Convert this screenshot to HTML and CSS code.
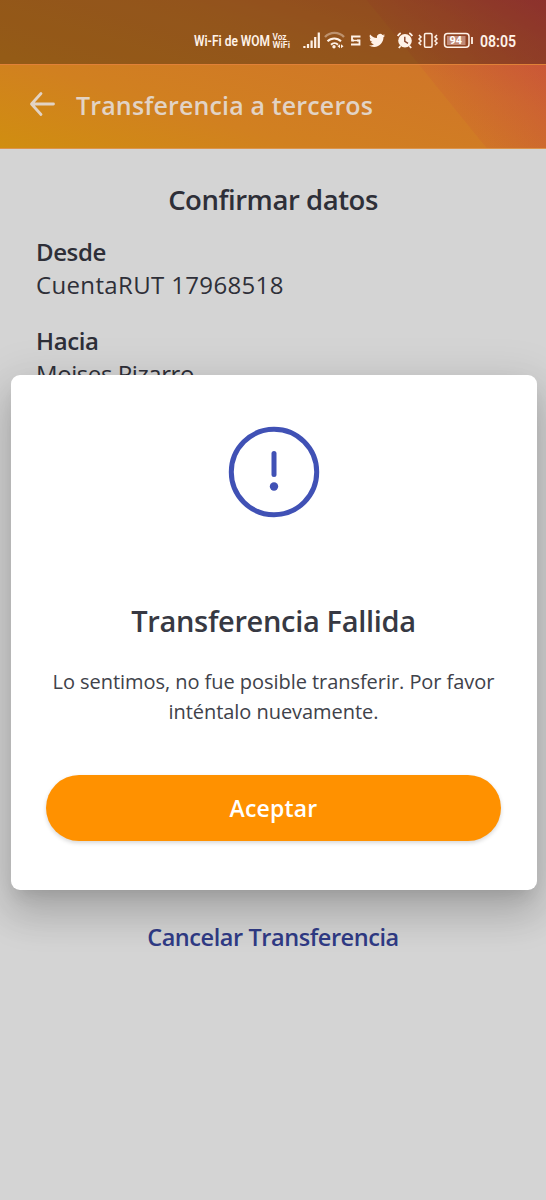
FILE: index.html
```html
<!DOCTYPE html>
<html lang="es">
<head>
<meta charset="utf-8">
<title>Transferencia a terceros</title>
<link rel="stylesheet" href="styles.css">
</head>
<body>
<div class="screen">
  <header class="header">
    <div class="statusbar">
      <svg class="status-icons" viewBox="190 26 350 30" width="350" height="30">
        <g class="status-text">
          <text x="194" y="46" font-size="14" textLength="76" lengthAdjust="spacingAndGlyphs">Wi-Fi de WOM</text>
          <text x="272.500" y="39.500" font-size="8.500" textLength="14" lengthAdjust="spacingAndGlyphs">Voz</text>
          <text x="272.500" y="48" font-size="8.500" textLength="17.500" lengthAdjust="spacingAndGlyphs">WiFi</text>
          <text x="480" y="46.500" font-size="17" textLength="36" lengthAdjust="spacingAndGlyphs">08:05</text>
        </g>
        <g fill="none" stroke="#fff2e8" stroke-width="2.200">
          <path d="M304.400 48v-2M308 48v-4M311.600 48v-7.500M315.200 48v-11M318.800 48V32.500"/>
          <path d="M325 38.500a13 13 0 0 1 19 0" opacity=".4" stroke-width="2.400" transform="translate(0 -1.500)"/>
          <path d="M327.500 41.300a9.500 9.500 0 0 1 13.500 0M331 44.700a5 5 0 0 1 7 0" stroke-width="2"/>
          <path d="M360.500 36.500H352v4h2M357 40.500h2.500v4H351" stroke-width="1.800"/>
          <path d="M352 40.500h8" stroke-width="1.400"/>
        </g>
        <circle cx="334" cy="46.700" r="1.700" fill="#fff2e8"/>
        <path d="M337.500 46.300l2.500-2v4zM343.500 46.300l-2.500-2v4z" fill="#fff2e8"/>
        <path transform="translate(369 32.400) scale(.67)" fill="#fff2e8" d="M23.950 4.570a10 10 0 0 1-2.820.78 4.960 4.960 0 0 0 2.160-2.730c-.95.560-2 .96-3.130 1.190a4.920 4.920 0 0 0-8.380 4.480C7.690 8.100 4.070 6.130 1.640 3.160a4.820 4.820 0 0 0-.67 2.480c0 1.710.87 3.210 2.190 4.100a4.900 4.900 0 0 1-2.230-.62v.06a4.920 4.920 0 0 0 3.950 4.830 5 5 0 0 1-2.210.08 4.940 4.940 0 0 0 4.600 3.420A9.870 9.870 0 0 1 0 19.540a13.990 13.990 0 0 0 7.560 2.210c9.050 0 14-7.500 14-13.980l-.02-.64a9.940 9.940 0 0 0 2.410-2.560z"/>
        <circle cx="405" cy="40.700" r="6.800" fill="#fff2e8"/>
        <path d="M397.700 36a8 8 0 0 1 3-3M409.300 33a8 8 0 0 1 3 3M400.500 46l-1.700 2M409.500 46l1.700 2" stroke="#fff2e8" stroke-width="1.800" fill="none"/>
        <path d="M404.800 36.800v4.500l3.200 2" stroke="#87432b" stroke-width="1.400" fill="none"/>
        <g fill="none" stroke="#fff2e8" stroke-width="1.500">
          <rect x="424.500" y="33.500" width="7.500" height="13.800" rx="1.200"/>
          <path d="M419 35l2 2-2 2 2 2-2 2 2 2M437 35l-2 2 2 2-2 2 2 2-2 2"/>
          <rect x="444.500" y="33.500" width="24.500" height="13.800" rx="3"/>
          <path d="M472 37v7" stroke-width="1.800"/>
        </g>
        <rect x="447" y="36" width="18.500" height="9" fill="#c08a77"/>
        <text class="battery-text" x="449.500" y="44.300" font-size="11" textLength="12.500" lengthAdjust="spacingAndGlyphs">94</text>
      </svg>
    </div>
    <div class="appbar">
      <svg class="back" viewBox="0 0 26 26" width="26" height="26"><path d="M12 2.500L2.500 13l9.500 10.500M3 13H24.500"/></svg>
      <h1 class="title">Transferencia a terceros</h1>
    </div>
  </header>
  <main class="content">
    <h2 class="heading">Confirmar datos</h2>
    <section class="account">
      <h3 class="label">Desde</h3>
      <p class="value number">CuentaRUT 17968518</p>
    </section>
    <section class="account">
      <h3 class="label">Hacia</h3>
      <p class="value name">Moises Pizarro</p>
    </section>
    <a class="cancel">Cancelar Transferencia</a>
  </main>
  <div class="dialog" role="alertdialog">
    <svg class="alert" viewBox="0 0 92 92" width="92" height="92">
      <circle cx="46" cy="46" r="42.700"/>
      <path d="M46 27.500v21"/>
      <circle class="dot" cx="46" cy="60.500" r="4.200"/>
    </svg>
    <h2 class="dialog-title">Transferencia Fallida</h2>
    <p class="message">Lo sentimos, no fue posible transferir. Por favor<br>inténtalo nuevamente.</p>
    <button class="accept">Aceptar</button>
  </div>
</div>
</body>
</html>
```
FILE: styles.css
```css
* { box-sizing: border-box; }
body, h1, h2, h3, p { margin: 0; }
body { font-family: "Open Sans", "Noto Sans", sans-serif; color: #2e2f38; }
.screen { position: relative; height: 1200px; overflow: hidden; background: #d4d4d4; }
.header { height: 149px; background: linear-gradient(51deg, transparent 73%, rgba(200, 65, 60, .12) 73.2%, rgba(196, 50, 75, .5)), linear-gradient(17deg, #d08e10 0%, #d18020 30%, #d07728 65%, #cd6a2d 86%, #c95a35 100%); }
.statusbar { height: 65px; padding: 26px 0 0 190px; background: rgba(0, 0, 0, .29); border-bottom: 1px solid #e18138; }
.status-icons { display: block; }
.status-text { font-family: Roboto, sans-serif; font-weight: 600; fill: #fff2e8; }
.battery-text { font-family: Roboto, sans-serif; font-weight: 700; fill: #fff; }
.appbar { display: flex; align-items: center; height: 84px; padding: 0 0 6px 29px; border-bottom: 1px solid #dc944c; }
.back { fill: none; stroke: #e2d3c5; stroke-width: 2.800; stroke-linecap: round; stroke-linejoin: round; }
.title { margin: 3px 0 0 21px; font-size: 25px; line-height: 34px; font-weight: 650; letter-spacing: .15px; color: #e2d3c5; white-space: nowrap; }
.content { display: flex; flex-direction: column; height: 1051px; padding: 32px 36px 0; }
.heading { font-size: 27.500px; line-height: 38px; font-weight: 600; letter-spacing: -.45px; text-align: center; }
.account { margin-top: 16px; height: 73px; }
.label { font-size: 24px; line-height: 34px; font-weight: 600; letter-spacing: -.4px; }
.value { font-size: 24px; line-height: 32px; font-weight: 400; white-space: nowrap; }
.number { letter-spacing: .35px; }
.name { letter-spacing: -.42px; }
.cancel { margin-top: 523px; font-size: 23.500px; line-height: 34px; font-weight: 600; letter-spacing: -.43px; text-align: center; color: #303b86; }
.dialog { position: absolute; left: 10.500px; top: 375px; width: 526px; height: 514.500px; padding: 51px 35px 0; border-radius: 9px; background: #fff; box-shadow: 0 11px 15px -7px rgba(0,0,0,.1), 0 24px 38px 3px rgba(0,0,0,.14), 0 9px 46px 8px rgba(0,0,0,.09); display: flex; flex-direction: column; align-items: center; }
.alert { fill: none; stroke: #4051b5; stroke-width: 5; stroke-linecap: round; }
.alert .dot { fill: #4051b5; stroke: none; }
.dialog-title { margin-top: 83px; font-size: 29px; line-height: 40px; font-weight: 600; letter-spacing: -.33px; color: #373943; white-space: nowrap; }
.message { margin-top: 26px; font-size: 20px; line-height: 30px; letter-spacing: -.05px; text-align: center; color: #40424a; white-space: nowrap; }
.accept { margin-top: 48px; width: 455px; height: 66px; padding: 0; border: 0; border-radius: 33px; background: #ff9100; box-shadow: 0 2px 4px rgba(0,0,0,.16); color: #fff; font: 600 23px/34px "Open Sans", sans-serif; letter-spacing: .2px; }
```
